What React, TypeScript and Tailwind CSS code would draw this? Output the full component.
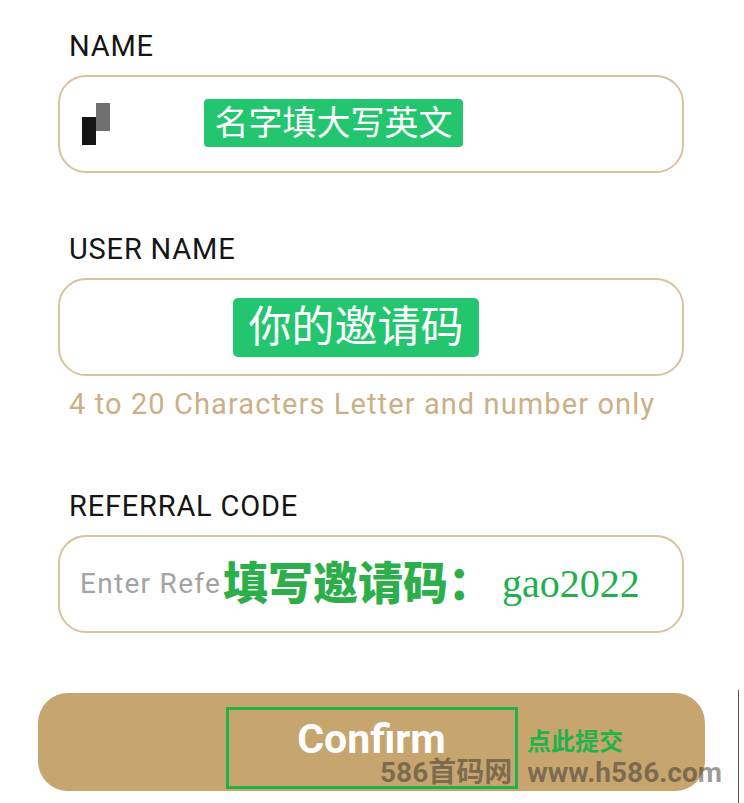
import React from "react";

const labelCls = "text-[29px] leading-[32px] text-[#151515] tracking-[0.8px]";
const boxCls =
  "relative flex items-center h-[98px] rounded-[28px] border-2 border-[#d7c39e] bg-white";

const App = () => {
  return (
    <div
      className="w-[744px] h-[803px] bg-white overflow-hidden relative"
      style={{ fontFamily: "Roboto, 'Noto Sans CJK SC', sans-serif" }}
    >
      <div className="pl-[58px] w-[684px] pt-[30px] flex flex-col">
        {/* NAME */}
        <div className={`${labelCls} pl-[11px]`}>NAME</div>
        <div className={`${boxCls} mt-[13px]`}>
          <div className="ml-[22px] relative w-[28px] h-[42px]">
            <div className="absolute left-[14px] top-0 w-[14px] h-[28px] bg-[#6f6f6f]" />
            <div className="absolute left-0 top-[14px] w-[14px] h-[28px] bg-[#141414]" />
          </div>
          <div className="ml-[94px] mb-[2px] h-[48px] w-[259px] flex items-center justify-center rounded-[4px] bg-[#24c56f] text-white text-[34px] leading-none">
            名字填大写英文
          </div>
        </div>

        {/* USER NAME */}
        <div className={`${labelCls} pl-[11px] mt-[60px]`}>USER NAME</div>
        <div className={`${boxCls} mt-[13px]`}>
          <div className="ml-[173px] h-[59px] w-[246px] flex items-center justify-center rounded-[5px] bg-[#24c56f] text-white text-[43px] leading-none">
            你的邀请码
          </div>
        </div>
        <div className="pl-[11px] mt-[12px] text-[29px] leading-[32px] tracking-[1.1px] text-[#cbb087] whitespace-nowrap">
          4 to 20 Characters Letter and number only
        </div>

        {/* REFERRAL CODE */}
        <div className={`${labelCls} pl-[11px] mt-[70px]`}>REFERRAL CODE</div>
        <div className={`${boxCls} mt-[13px]`}>
          <div className="ml-[20px] w-[143px] whitespace-nowrap text-[28px] tracking-[1.3px] text-[#a3a3a3]">
            Enter Refe
          </div>
          <span className="text-[45px] font-black text-[#2cae4b] leading-none whitespace-nowrap">
            填写邀请码：
          </span>
          <span
            className="ml-[9px] text-[40px] text-[#1fb04c] leading-none"
            style={{ fontFamily: "'Liberation Serif', serif" }}
          >
            gao2022
          </span>
        </div>
      </div>

      {/* Confirm button */}
      <div className="mt-[60px] ml-[38px] w-[667px] h-[98px] rounded-[30px] bg-[#c6a56f] relative flex items-center justify-center">
        <span className="text-[41px] font-bold text-white mb-[4px]">Confirm</span>
        <div className="absolute left-[188px] top-[14px] w-[292px] h-[82px] border-[3px] border-[#22b24c]" />
        <span className="absolute left-[489px] top-[37px] text-[24px] font-bold text-[#22b24c] leading-none">
          点此提交
        </span>
      </div>

      {/* watermark */}
      <div className="absolute left-[380px] top-[759px] flex gap-[15px] text-[28px] font-bold leading-none text-[#2a2a2a]/[0.47] whitespace-nowrap">
        <span>586首码网</span>
        <span>www.h586.com</span>
      </div>
      <div className="absolute left-[738px] top-[690px] bottom-0 w-[1px] bg-[#555]" />
    </div>
  );
};

export default App;
